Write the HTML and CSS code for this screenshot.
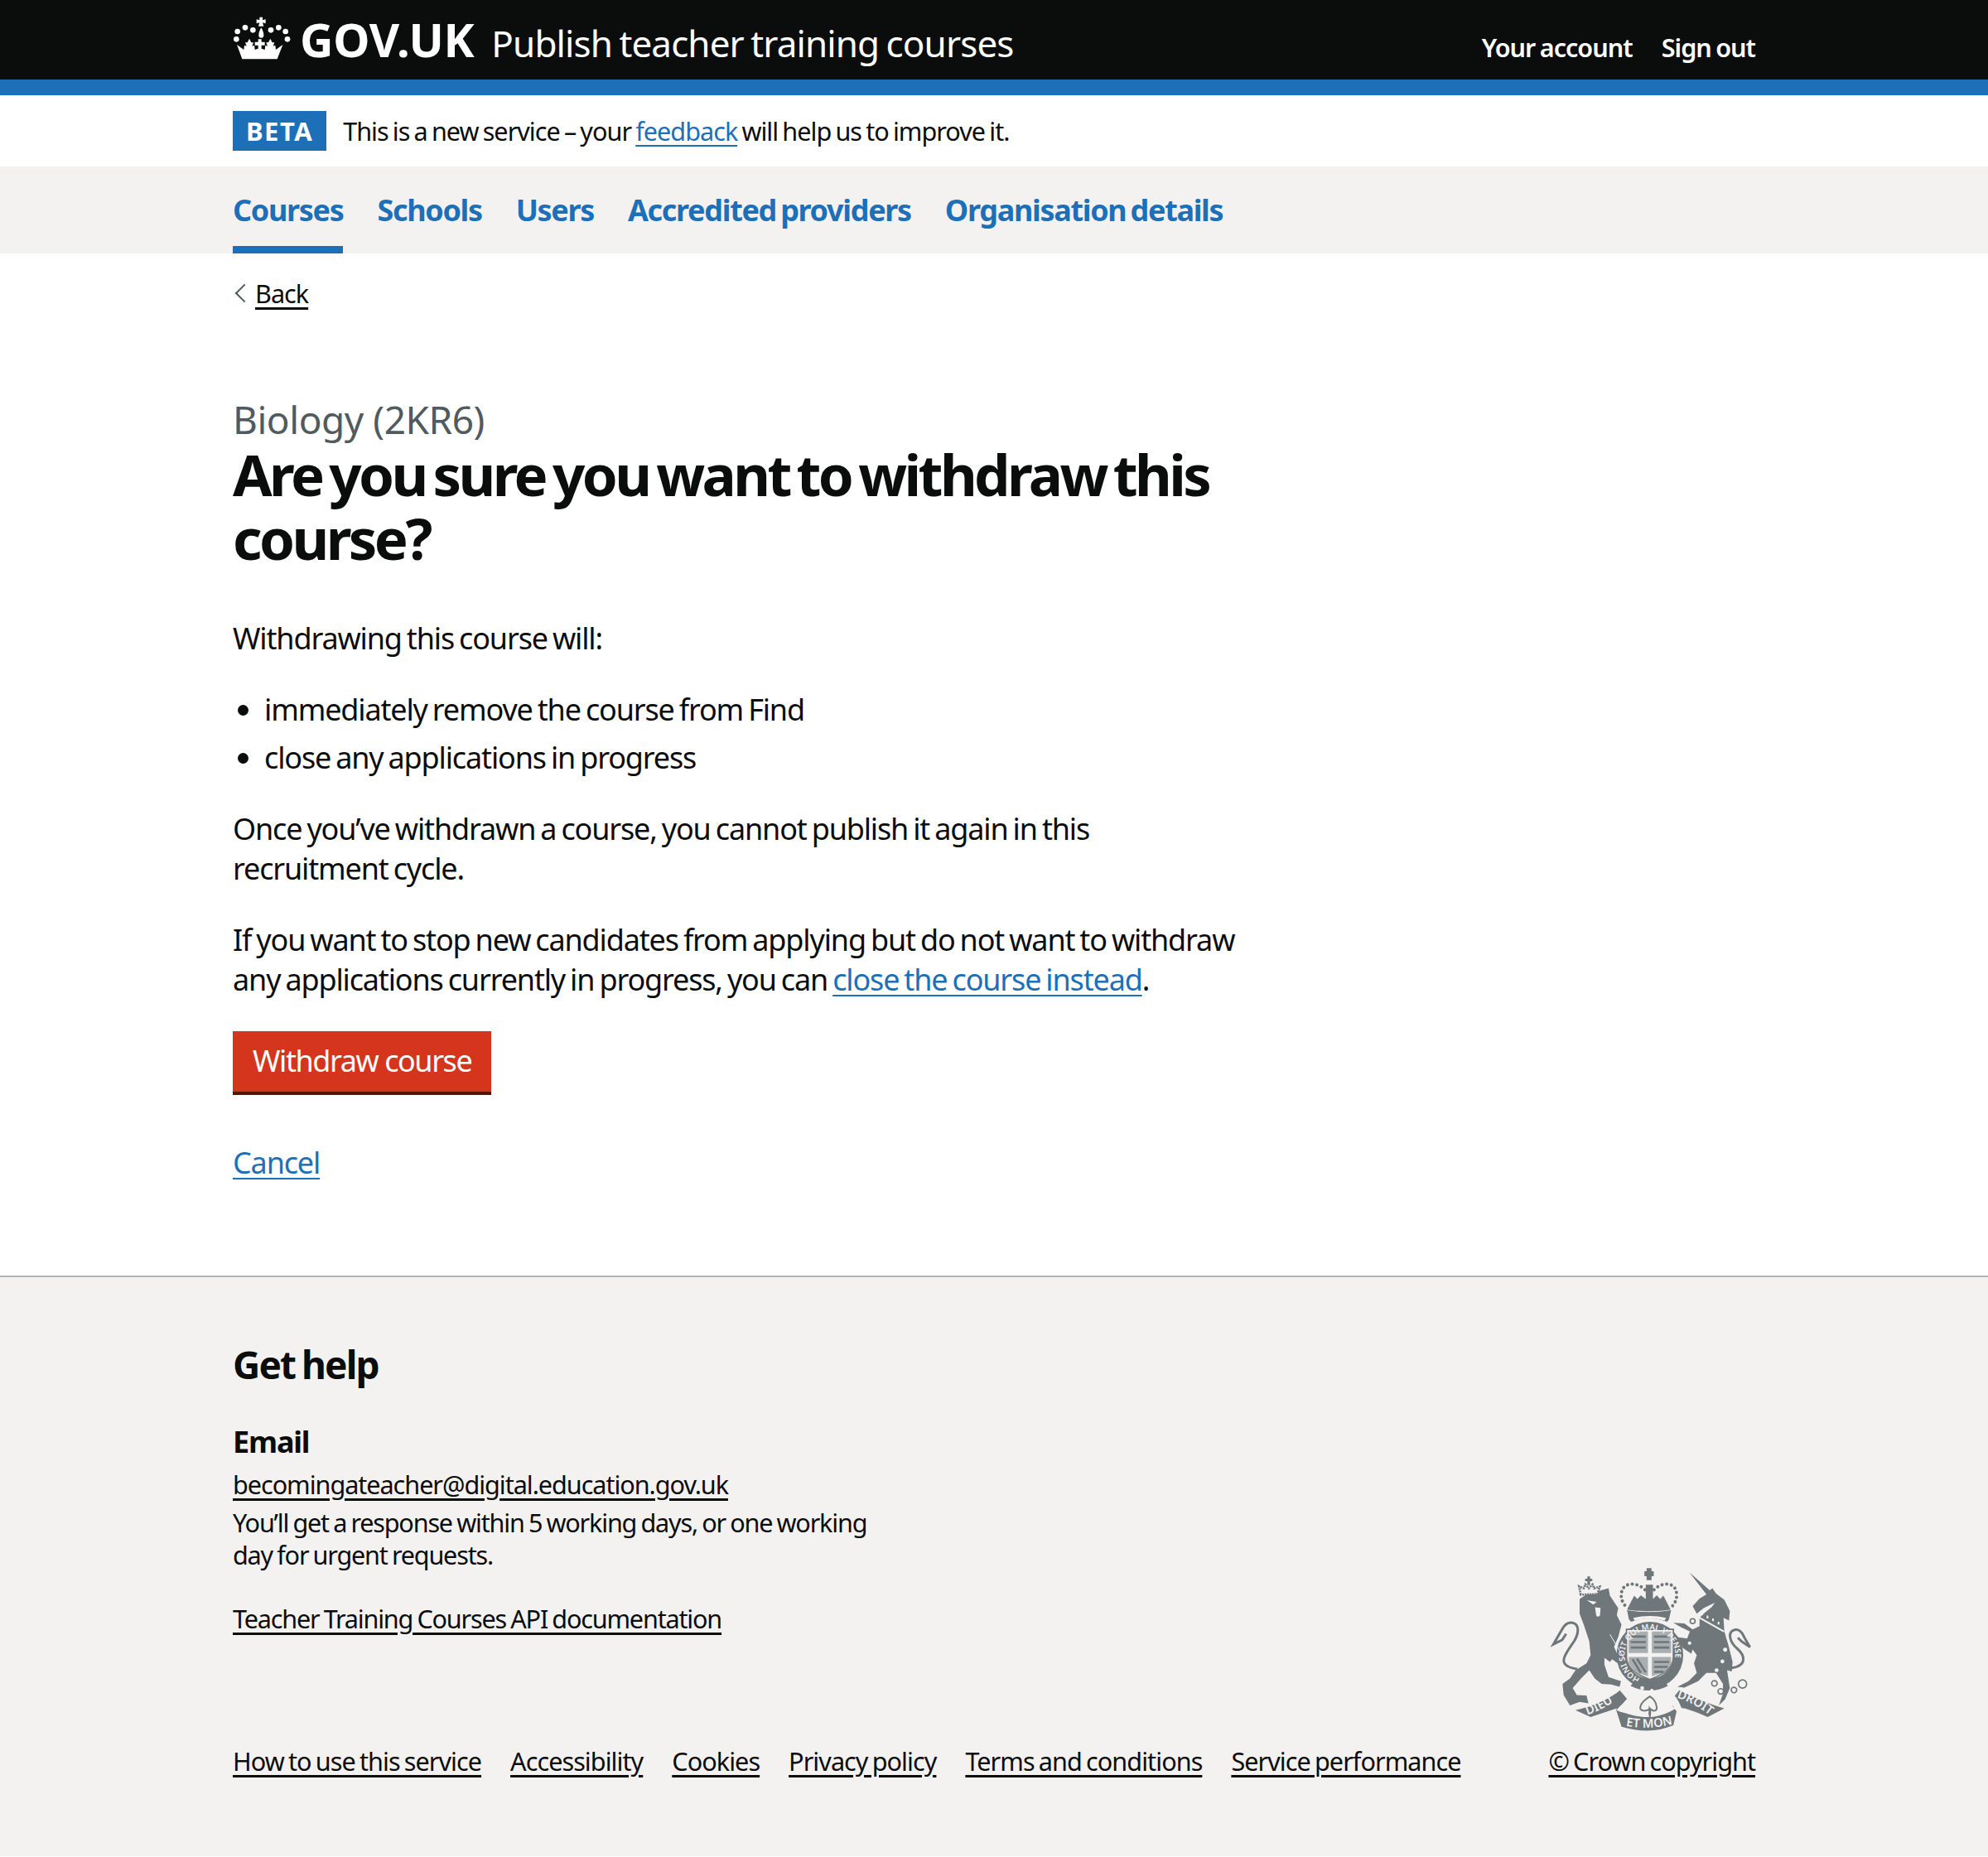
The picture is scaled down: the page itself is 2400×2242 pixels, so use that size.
FILE: index.html
```html
<!DOCTYPE html>
<html lang="en">
<head>
<meta charset="utf-8">
<title>Withdraw course</title>
<link rel="stylesheet" href="styles.css">
</head>
<body>
<header class="site-header">
  <div class="container header-inner">
    <div class="brand">
      <svg class="crown" viewBox="30 25 210 165" aria-hidden="true">
        <path d="M127 30h11v11l11-3v15l-11-3 4 13h-19l4-13-11 3V38l11 3z"/>
        <path d="M133 68c7 12 9 20 9 28a9 9 0 0 1-18 0c0-8 2-16 9-28z"/>
        <circle cx="47" cy="82" r="10"/><circle cx="75" cy="68" r="10"/><circle cx="103" cy="77" r="10"/>
        <circle cx="168" cy="77" r="10"/><circle cx="196" cy="68" r="10"/><circle cx="221" cy="82" r="10"/>
        <circle cx="43" cy="110" r="10"/><circle cx="228" cy="110" r="10"/>
        <path d="M45 130l25 18 2-16 8 3-5-13h8l7-14 7 14h8l-5 13 8-3 2 16 12-4v-12h-12v-12h12v-10h12v10h12v12h-12v12l12 4 2-16 8 3-5-13h8l7-14 7 14h8l-5 13 8-3 2 16 25-18-20 52H64z"/>
      </svg>
      <span class="logo-text">GOV.UK</span>
      <span class="service-name">Publish teacher training courses</span>
    </div>
    <nav class="account-nav">
      <a href="#">Your account</a>
      <a href="#">Sign out</a>
    </nav>
  </div>
</header>
<div class="blue-bar"></div>

<div class="container phase">
  <strong class="tag">BETA</strong>
  <span>This is a new service – your <a class="link" href="#">feedback</a> will help us to improve it.</span>
</div>

<nav class="primary-nav">
  <div class="container primary-list">
    <a class="current" href="#">Courses</a>
    <a href="#">Schools</a>
    <a href="#">Users</a>
    <a href="#">Accredited providers</a>
    <a href="#">Organisation details</a>
  </div>
</nav>

<main class="container">
  <a class="back" href="#">Back</a>
  <div class="content">
    <span class="caption">Biology (2KR6)</span>
    <h1>Are you sure you want to withdraw this course?</h1>
    <p>Withdrawing this course will:</p>
    <ul>
      <li>immediately remove the course from Find</li>
      <li>close any applications in progress</li>
    </ul>
    <p>Once you’ve withdrawn a course, you cannot publish it again in this recruitment cycle.</p>
    <p>If you want to stop new candidates from applying but do not want to withdraw any applications currently in progress, you can <a class="link" href="#">close the course instead</a>.</p>
    <a class="button" href="#">Withdraw course</a>
    <p class="cancel"><a class="link" href="#">Cancel</a></p>
  </div>
</main>

<footer class="footer">
  <div class="container footer-inner">
    <div class="footer-main">
      <h2>Get help</h2>
      <h3>Email</h3>
      <p class="f-link"><a href="#">becomingateacher@digital.education.gov.uk</a></p>
      <p class="f-note">You’ll get a response within 5 working days, or one working day for urgent requests.</p>
      <p class="f-api"><a href="#">Teacher Training Courses API documentation</a></p>
      <ul class="f-meta">
        <li><a href="#">How to use this service</a></li>
        <li><a href="#">Accessibility</a></li>
        <li><a href="#">Cookies</a></li>
        <li><a href="#">Privacy policy</a></li>
        <li><a href="#">Terms and conditions</a></li>
        <li><a href="#">Service performance</a></li>
      </ul>
    </div>
    <div class="f-copy">
      <svg class="crest" viewBox="90 60 740 610" aria-hidden="true">
        <defs>
          <path id="garter" d="M423.5 471.5A92 92 0 1 1 486.5 471.5"/>
          <path id="rib-l" d="M228 602Q290 582 342 540"/>
          <path id="rib-c" d="M368 642Q450 657 538 636"/>
          <path id="rib-r" d="M552 540Q620 560 680 610"/>
        </defs>
        <!-- lion -->
        <path class="ink" d="M200 182l25-17 80-22 5 27 30 45-5 25 17 35-12 45-15 35 15 35 22 10-17 20-27-20-8 10-20-15v25l15 45 45 15-5 20-30-8-35-2-25-20-20-30-30 30-30 35 15 25 35 2 7 28-32-5-35 13-23-38-4-40 27-20 20-30 40-25 15-30-5-50-20-60-15-40z"/>
        <path class="line" d="M192 436C108 424 150 380 180 335c16-26 20-56 0-65-20-8-36 6-46 26l-29 50 32-16 14-22"/>
        <path class="cut" d="M226 186l36 6-12 10zM256 212l20 2-2 28c-6 6-12 4-14-2z"/>
        <path class="lion-crown" d="M204 166l-6-30 17 7 6-14 12 14 14-14 6 14 20-6-8 27z"/>
        <path class="ink" d="M228 100h10v8h8v9h-8v14h-10v-14h-8v-9h8z"/>
        <!-- unicorn -->
        <path class="ink" d="M598 85l74 65 10-7 13 19 30 23 20 40-3 35-20-10 3 50 15 50 15 60-3 35-17-5 10 65-17 40-23 23 15-43v-35l-25-40h-35l-30 30-50 23-25-3 40-20 30-30-10-35 10-30-15-20-5 15-30-20-25-40 40 5 10-25-30-15-30-17 40 2 30 22 25-12v-30l15-15 30-25 10-15-40 20-25 20-15-27 25-28 25-15z"/>
        <path class="line" d="M752 432c54-8 50-44 20-70-28-24-34-56-16-66 20-10 34 6 42 26l20 34-30-20-14-14"/>
        <path class="collar" d="M632 248l92 52M645 240v-10M664 252v-10M684 262v-10M704 274v-10"/>
        <circle class="ring" cx="610" cy="262" r="9"/><circle class="ring" cx="599" cy="342" r="9"/>
        <circle class="ring" cx="689" cy="488" r="10"/><circle class="ring" cx="712" cy="517" r="10"/>
        <circle class="ring" cx="760" cy="512" r="10"/><circle class="ring" cx="791" cy="490" r="15"/>
        <circle class="ring" cx="728" cy="366" r="10"/>
        <circle class="dot" cx="718" cy="408" r="7"/><circle class="dot" cx="697" cy="440" r="7"/>
        <!-- garter and shield -->
        <circle class="garter" cx="455" cy="385" r="103"/>
        <path class="shield" d="M370 292h170v100c0 46-46 66-85 82-39-16-85-36-85-82z"/>
        <path class="quarter" d="M378 300h70v78h-70zM462 300h70v78h-70zM378 392h70v70l-45-14-25-30zM462 392h70v26l-25 30-45 14z"/>
        <path class="hatch" d="M385 318h55M385 338h55M385 358h55M470 318h55M470 338h55M470 358h55M470 410h55M470 428h50M470 446h35M392 400l30 50M408 398l32 50"/>
        <text class="garter-text"><textPath href="#garter" startOffset="1%">HONI SOIT QUI MAL Y PENSE</textPath></text>
        <path class="ink" d="M385 497q70 34 135 0l-12-20q-55 22-108 0z"/>
        <circle class="dot" cx="427" cy="505" r="7"/><circle class="dot" cx="462" cy="515" r="7"/>
        <path class="ink-arm" d="M310 310l52 88"/>
        <!-- royal crown -->
        <path class="ink" d="M443 70h18v11h8v18h-8v14h-18V99h-8V81h8z"/>
        <path class="beads" d="M437 148c-30-30-87-30-86 22 0 20 12 32 20 44M470 148c30-30 84-30 82 22 0 20-12 32-20 44"/>
        <path class="ink" d="M440 130h26v52l14-14 12 14 12-12 26 50c-40 8-118 8-158 0l26-50 12 12 12-14 18 14z"/>
        <path class="ink" d="M372 222q80 14 160 0l-8 34-7 8q-65-24-130 0l-8-8z"/>
        <path class="cut" d="M395 250q60-14 118 0l-4 10q-55-14-110 0z"/>
        <!-- motto ribbon -->
        <path class="ink" d="M185 585c65-15 125-40 165-75l35 25c-25 25-40 35-55 55l5-12-95 32z"/>
        <path class="ink" d="M530 535l25-25c55 25 105 50 170 68l-60 32c-45-20-95-40-125-35z"/>
        <path class="ink" d="M333 585c97 35 147 35 222-10l-15 65c-60 25-120 25-188 5z"/>
        <path class="cut" d="M345 512l12-4 35 30-30 55-20-4c8-20 20-35 30-45zM562 512l-12-4-30 30 30 50 20-10c-8-20-15-35-25-45z"/>
        <path class="fleur" d="M455 535c16 10 24 26 25 42 0 12-15 14-25 2 2 12 2 20 0 28-3-8-3-16 0-28-10 12-35 10-35-2 0-15 18-32 35-42z"/>
        <text class="rib-text"><textPath href="#rib-l">DIEU</textPath></text>
        <text class="rib-text"><textPath href="#rib-c">ET MON</textPath></text>
        <text class="rib-text"><textPath href="#rib-r">DROIT</textPath></text>
      </svg>
      <a href="#">© Crown copyright</a>
    </div>
  </div>
</footer>
</body>
</html>
```
FILE: styles.css
```css
* { box-sizing: border-box; letter-spacing: -0.032em; word-spacing: -0.06em; }
html, body { margin: 0; padding: 0; }
body {
  font-family: "Noto Sans", Arial, sans-serif;
  color: #0b0c0c;
  background: #fff;
  font-size: 36px;
  line-height: 48px;
}
.container { width: 1838px; margin: 0 auto; }

.site-header { background: #0b0c0c; height: 96px; color: #fff; }
.header-inner { display: flex; justify-content: space-between; height: 96px; }
.brand { display: flex; align-items: flex-start; }
.crown { width: 70px; height: 55px; fill: #fff; margin-top: 19px; }
.logo-text { font-weight: 700; font-size: 56px; line-height: 96px; margin-left: 11px; margin-top: -1px; letter-spacing: -0.005em; }
.service-name { font-size: 44px; line-height: 104px; margin-left: 21px; letter-spacing: -0.02em; word-spacing: -0.05em; }
.account-nav { display: flex; gap: 35px; align-items: center; padding-top: 18px; }
.account-nav a { color: #fff; text-decoration: none; font-weight: 600; font-size: 30.6px; letter-spacing: -0.033em; word-spacing: -0.05em; }
.blue-bar { height: 19px; background: #1d70b8; }

.phase { display: flex; align-items: center; gap: 20px; height: 86px; font-size: 30.6px; }
.phase span, .phase .link { letter-spacing: -0.032em; word-spacing: -0.06em; }
.tag { background: #1d70b8; color: #fff; font-size: 31px; line-height: 48px; padding: 0 16px; letter-spacing: 1.5px; font-weight: 700; }
.link { color: #1d70b8; text-decoration: underline; text-underline-offset: 5px; text-decoration-thickness: 2px; }

.primary-nav { background: #f3f2f1; height: 105px; }
.primary-list { display: flex; gap: 41px; height: 105px; }
.primary-list a { color: #1d70b8; text-decoration: none; font-weight: 700; font-size: 36px; line-height: 105px; height: 105px; letter-spacing: -0.037em; word-spacing: -0.08em; }
.primary-list .current { border-bottom: 9px solid #1d70b8; }

.back { display: block; margin-top: 24px; padding-left: 27px; font-size: 30.6px; line-height: 48px; color: #0b0c0c; position: relative; width: max-content; text-underline-offset: 5px; }
.back::before { content: ""; position: absolute; left: 6px; top: 16px; width: 14px; height: 14px; border-left: 2px solid #505a5f; border-bottom: 2px solid #505a5f; transform: rotate(45deg); }

.content { width: 1215px; padding-top: 100px; padding-bottom: 112px; }
.caption { display: block; color: #505a5f; font-size: 46px; line-height: 56px; letter-spacing: -0.01em; word-spacing: 0; }
h1 { font-size: 68.9px; line-height: 77px; font-weight: 700; margin: 0 0 59px; letter-spacing: -0.052em; word-spacing: -0.08em; }
.content p { margin: 0 0 38px; }
.content ul { margin: 0 0 38px; padding-left: 38px; }
.content li { margin-bottom: 10px; }
.button { display: inline-block; background: #d4351c; color: #fff; text-decoration: none; height: 77px; line-height: 72px; padding: 0 24px; box-shadow: inset 0 -4px 0 #55150b; letter-spacing: -0.04em; word-spacing: 0; }
.content .cancel { margin: 58px 0 0; }

.footer { background: #f3f2f1; border-top: 2px solid #b1b4b6; height: 701px; }
.footer-inner { display: flex; justify-content: space-between; align-items: flex-end; height: 100%; padding-bottom: 95px; }
.footer a { color: #0b0c0c; text-underline-offset: 5px; white-space: nowrap; }
.footer-main { font-size: 30.6px; line-height: 39px; }
.footer-main h2 { font-size: 46px; line-height: 56px; margin: 0 0 42px; font-weight: 700; letter-spacing: -0.04em; word-spacing: -0.05em; }
.footer-main h3 { font-size: 36px; line-height: 48px; margin: 0 0 8px; font-weight: 700; letter-spacing: -0.033em; }
.footer-main p, .footer-main p a { margin: 0; letter-spacing: -0.039em; word-spacing: -0.05em; }
.footer-main .f-link a { letter-spacing: -0.034em; }
.f-link { margin-bottom: 7px !important; }
.f-note { width: 800px; }
.f-api { margin-top: 38px !important; }
.f-meta { list-style: none; display: flex; gap: 35px; padding: 0; margin: 133px 0 0; }
.f-meta a { letter-spacing: -0.031em; word-spacing: -0.06em; }
.f-copy { display: flex; flex-direction: column; align-items: flex-end; font-size: 30.6px; line-height: 39px; }
.crest { width: 247px; height: 203px; margin-bottom: 14px; margin-right: 2px; }
.crest text, .crest textPath { letter-spacing: 0; word-spacing: 0; }
.ink { fill: #6f777b; }
.ink-arm { fill: none; stroke: #f3f2f1; stroke-width: 3; }
.line { fill: none; stroke: #6f777b; stroke-width: 9; }
.cut { fill: #f3f2f1; }
.lion-crown { fill: #f3f2f1; stroke: #6f777b; stroke-width: 8; stroke-dasharray: 6 3; }
.collar { fill: none; stroke: #f3f2f1; stroke-width: 6; }
.ring { fill: #f3f2f1; stroke: #6f777b; stroke-width: 5; }
.dot { fill: #f3f2f1; }
.garter { fill: #f3f2f1; stroke: #6f777b; stroke-width: 36; }
.shield { fill: #f3f2f1; stroke: #6f777b; stroke-width: 5; }
.quarter { fill: #a9aeb1; }
.hatch { fill: none; stroke: #6f777b; stroke-width: 8; }
.beads { fill: none; stroke: #6f777b; stroke-width: 12; stroke-linecap: round; stroke-dasharray: 0.1 17; }
.garter-text { font-family: "Noto Sans", sans-serif; font-size: 29px; fill: #f3f2f1; font-weight: 600; }
.rib-text { font-family: "Noto Sans", sans-serif; font-size: 44px; fill: #f3f2f1; font-weight: 600; }
.fleur { fill: #f3f2f1; stroke: #6f777b; stroke-width: 6; }
```
